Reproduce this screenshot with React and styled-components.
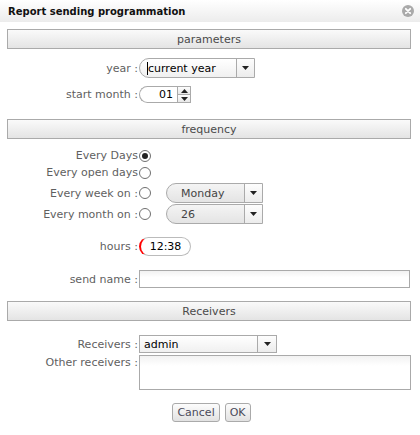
import React from "react";
import styled, { createGlobalStyle } from "styled-components";

const GlobalStyle = createGlobalStyle`
  html, body { margin: 0; padding: 0; background: #fff; }
  body { font-family: "DejaVu Sans", Verdana, sans-serif; font-size: 11px; color: #5a5a5a; }
`;

function Arrow() {
  return (
    <svg width="7" height="4" viewBox="0 0 7 4">
      <path d="M0 0H7L3.5 4Z" fill="#222" />
    </svg>
  );
}

function CloseIcon() {
  return (
    <svg width="12" height="12" viewBox="0 0 12 12">
      <circle cx="6" cy="6" r="6" fill="#a9a9a9" />
      <path d="M3.8 3.8L8.2 8.2M8.2 3.8L3.8 8.2" stroke="#fff" strokeWidth="1.8" strokeLinecap="round" />
    </svg>
  );
}

function App() {
  return (
    <>
      <GlobalStyle />
      <Sdialog>
        <StitleBar>
          <Stitle>Report sending programmation</Stitle>
          <CloseIcon />
        </StitleBar>
        <Sbody>
          <Ssection>parameters</Ssection>
          <Srow $top={9}>
            <Slabel>year :</Slabel>
            <Sselect $w={116} $round>
              <Svalue $caret>current year</Svalue>
              <SarrowBox><Arrow /></SarrowBox>
            </Sselect>
          </Srow>
          <Srow $top={8} $h={17}>
            <Slabel>start month :</Slabel>
            <Sspin>
              <SspinField>01</SspinField>
              <SspinButtons>
                <SspinBtn><svg width="7" height="4" viewBox="0 0 7 4"><path d="M0 4H7L3.5 0Z" fill="#222" /></svg></SspinBtn>
                <SspinBtn><Arrow /></SspinBtn>
              </SspinButtons>
            </Sspin>
          </Srow>
          <Ssection $top={16}>frequency</Ssection>
          <Srow $top={8} $h={17}>
            <Slabel>Every Days</Slabel>
            <Sradio $checked />
          </Srow>
          <Srow $h={17}>
            <Slabel>Every open days</Slabel>
            <Sradio />
          </Srow>
          <Srow $top={2} $h={20}>
            <Slabel>Every week on :</Slabel>
            <Sradio />
            <Sselect $w={97} $round $disabled $gap={15}>
              <Svalue $pad={14}>Monday</Svalue>
              <SarrowBox><Arrow /></SarrowBox>
            </Sselect>
          </Srow>
          <Srow $h={20} $top={1}>
            <Slabel>Every month on :</Slabel>
            <Sradio />
            <Sselect $w={97} $round $disabled $gap={15}>
              <Svalue $pad={14}>26</Svalue>
              <SarrowBox><Arrow /></SarrowBox>
            </Sselect>
          </Srow>
          <Srow $top={13} $h={19}>
            <Slabel>hours :</Slabel>
            <Stime>12:38</Stime>
          </Srow>
          <Srow $top={14} $h={18}>
            <Slabel>send name :</Slabel>
            <Sinput />
          </Srow>
          <Ssection $top={13}>Receivers</Ssection>
          <Srow $top={14} $h={18}>
            <Slabel>Receivers :</Slabel>
            <Sselect $w={138}>
              <Svalue $pad={4} $dark>admin</Svalue>
              <SarrowBox $w={18}><Arrow /></SarrowBox>
            </Sselect>
          </Srow>
          <Srow $top={2} $h={35} $align="flex-start">
            <Slabel $pt={1}>Other receivers :</Slabel>
            <Stextarea />
          </Srow>
          <Sbuttons>
            <Sbutton>Cancel</Sbutton>
            <Sbutton>OK</Sbutton>
          </Sbuttons>
        </Sbody>
      </Sdialog>
    </>
  );
}

const Sdialog = styled.div`
  width: 420px;
  height: 435px;
  background: #fff;
  overflow: hidden;
`;

const StitleBar = styled.div`
  height: 22px;
  display: flex;
  align-items: center;
  justify-content: space-between;
  padding: 0 6px 0 8px;
  background: linear-gradient(#ffffff, #ececec);
`;

const Stitle = styled.div`
  font-weight: bold;
  font-size: 10px;
  color: #111;
`;

const Sbody = styled.div`
  padding: 7px 9px 0 7px;
  display: flex;
  flex-direction: column;
`;

const Ssection = styled.div`
  margin-top: ${(p) => p.$top || 0}px;
  height: 20px;
  box-sizing: border-box;
  border: 1px solid #aaa;
  background: linear-gradient(#fafafa, #e4e4e4);
  display: flex;
  align-items: center;
  justify-content: center;
  color: #4a4a4a;
`;

const Srow = styled.div`
  margin-top: ${(p) => p.$top || 0}px;
  height: ${(p) => p.$h || 20}px;
  display: flex;
  align-items: ${(p) => p.$align || "center"};
`;

const Slabel = styled.div`
  width: 131px;
  flex: none;
  text-align: right;
  white-space: nowrap;
  padding-top: ${(p) => p.$pt || 0}px;
  color: #5f5f5f;
`;

const Sselect = styled.div`
  margin-left: ${(p) => p.$gap || 1}px;
  width: ${(p) => p.$w}px;
  height: 100%;
  box-sizing: border-box;
  display: flex;
  border: 1px solid #aaa;
  border-radius: ${(p) => (p.$round ? "10px 0 0 10px" : "0")};
  background: ${(p) => (p.$disabled ? "linear-gradient(#f4f4f4, #e4e4e4)" : "linear-gradient(#ffffff, #f0f0f0)")};
  color: ${(p) => (p.$disabled ? "#444" : "#000")};
`;

const Svalue = styled.div`
  flex: 1;
  display: flex;
  align-items: center;
  padding-left: ${(p) => p.$pad || 8}px;
  color: ${(p) => (p.$dark ? "#000" : "inherit")};
  ${(p) => p.$caret && "border-left: 1px solid #000; margin-left: 7px; padding-left: 0; height: 13px; align-self: center;"}
`;

const SarrowBox = styled.div`
  width: ${(p) => p.$w || 17}px;
  flex: none;
  border-left: 1px solid #aaa;
  display: flex;
  align-items: center;
  justify-content: center;
  background: linear-gradient(#fdfdfd, #ececec);
`;

const Sspin = styled.div`
  margin-left: 1px;
  height: 17px;
  display: flex;
`;

const SspinField = styled.div`
  width: 38px;
  box-sizing: border-box;
  border: 1px solid #aaa;
  border-right: none;
  border-radius: 9px 0 0 9px;
  display: flex;
  align-items: center;
  justify-content: flex-end;
  padding-right: 4px;
  color: #000;
`;

const SspinButtons = styled.div`
  width: 14px;
  box-sizing: border-box;
  border: 1px solid #aaa;
  display: flex;
  flex-direction: column;
`;

const SspinBtn = styled.div`
  flex: 1;
  display: flex;
  align-items: center;
  justify-content: center;
  background: linear-gradient(#fdfdfd, #e8e8e8);
  & + & { border-top: 1px solid #aaa; }
`;

const Sradio = styled.div`
  margin-left: 1px;
  width: 12px;
  height: 12px;
  box-sizing: border-box;
  border: 1px solid #6f6f6f;
  border-radius: 50%;
  background: #fff;
  flex: none;
  position: relative;
  &::after {
    content: "";
    display: ${(p) => (p.$checked ? "block" : "none")};
    position: absolute;
    left: 2px;
    top: 2px;
    width: 6px;
    height: 6px;
    border-radius: 50%;
    background: #222;
  }
`;

const Stime = styled.div`
  margin-left: 1px;
  width: 52px;
  height: 19px;
  box-sizing: border-box;
  border: 1px solid #bbb;
  border-left: 2px solid #f00;
  border-radius: 10px;
  display: flex;
  align-items: center;
  justify-content: center;
  color: #000;
`;

const Sinput = styled.div`
  margin-left: 1px;
  width: 271px;
  height: 18px;
  box-sizing: border-box;
  border: 1px solid #aaa;
  background: linear-gradient(#f2f2f2, #fff 40%);
`;

const Stextarea = styled.div`
  margin-left: 1px;
  width: 272px;
  height: 35px;
  box-sizing: border-box;
  border: 1px solid #aaa;
  background: linear-gradient(#f2f2f2, #fff 30%);
`;

const Sbuttons = styled.div`
  margin-top: 13px;
  display: flex;
  justify-content: center;
  gap: 5px;
  padding-left: 5px;
`;

const Sbutton = styled.div`
  height: 19px;
  padding: 0 4px;
  box-sizing: border-box;
  border: 1px solid #aaa;
  border-radius: 3px;
  background: linear-gradient(#fcfcfc, #e2e2e2);
  display: flex;
  align-items: center;
  color: #4a4a5a;
`;

export default App;
